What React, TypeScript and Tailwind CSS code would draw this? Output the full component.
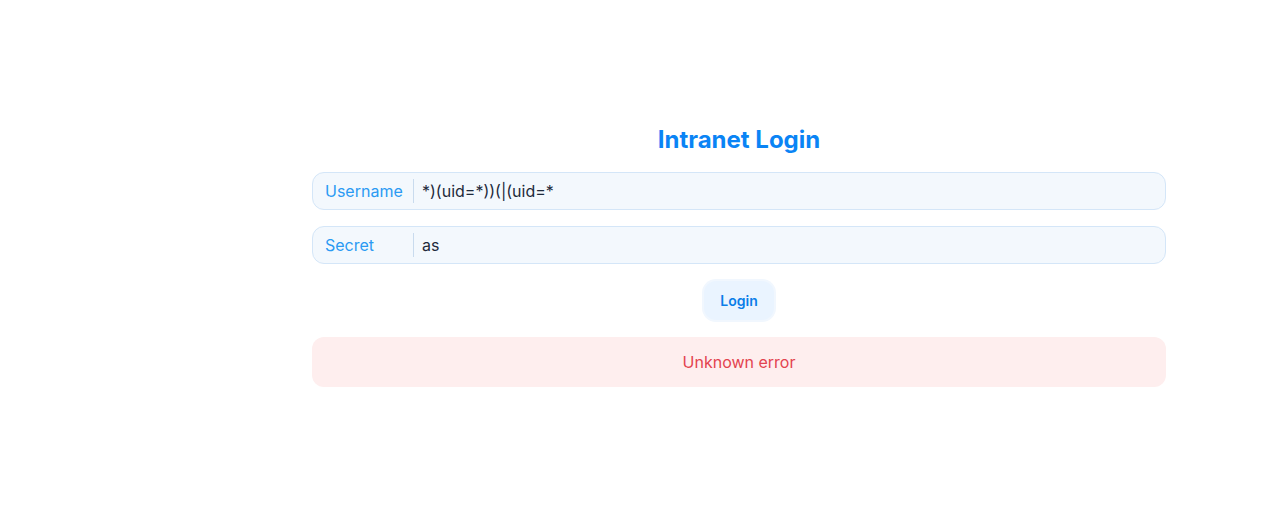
import React from 'react';

export default function App() {
  return (
    <div className="min-h-[517px] bg-white flex" style={{ fontFamily: 'Inter, "Noto Sans", sans-serif' }}>
      <div className="w-[196px] shrink-0" />
      <main className="flex-1 px-[116px] pt-[124px]">
        <h1 className="text-center text-2xl font-bold text-[#0a84f5] leading-8">Intranet Login</h1>
        <form className="mt-4 flex flex-col gap-4" onSubmit={(e) => e.preventDefault()}>
          <label className="flex items-center h-[38px] rounded-xl border border-[#d4e6f8] bg-[#f3f8fd]">
            <span className="w-[101px] shrink-0 pl-3 text-base text-[#2b9af3] border-r border-[#c9dbee] leading-6">Username</span>
            <input
              className="flex-1 bg-transparent outline-none pl-2 text-base text-[#1e2a3b]"
              defaultValue="*)(uid=*))(|(uid=*"
            />
          </label>
          <label className="flex items-center h-[38px] rounded-xl border border-[#d4e6f8] bg-[#f3f8fd]">
            <span className="w-[101px] shrink-0 pl-3 text-base text-[#2b9af3] border-r border-[#c9dbee] leading-6">Secret</span>
            <input
              type="text"
              className="flex-1 bg-transparent outline-none pl-2 text-base text-[#1e2a3b]"
              defaultValue="as"
            />
          </label>
          <div className="mt-[1px] flex justify-center">
            <button
              type="submit"
              className="h-[39px] px-4 rounded-xl bg-[#eaf4ff] text-sm font-semibold text-[#0a7ee8] ring-2 ring-[#f1f7fe]"
            >
              Login
            </button>
          </div>
        </form>
        <div className="mt-[17px] h-[50px] rounded-xl bg-[#feeeee] flex items-center justify-center text-base text-[#e3434f]">
          Unknown error
        </div>
      </main>
    </div>
  );
}
